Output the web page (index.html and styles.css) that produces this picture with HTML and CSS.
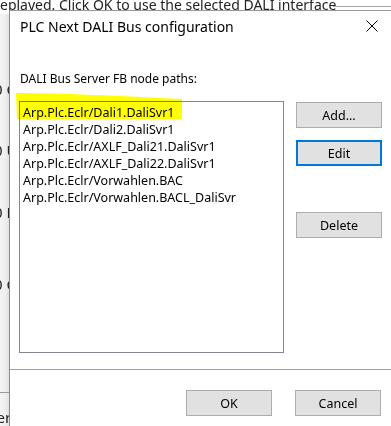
FILE: index.html
```html
<!DOCTYPE html>
<html>
<head>
<meta charset="utf-8">
<link rel="stylesheet" href="styles.css">
</head>
<body>
<div class="screen">
  <div class="bg">
    <div class="bg-top">eplayed. Click OK to use the selected DALI interface</div>
    <div class="bg-rule"></div>
    <div class="frag f1">0 C</div>
    <div class="frag f2">0 U</div>
    <div class="frag f3">0 N</div>
    <div class="frag f4">0 C</div>
    <div class="bg-line"></div>
    <div class="frag f5">ter</div>
  </div>

  <div class="dialog">
    <div class="titlebar">
      <span class="title">PLC Next DALI Bus configuration</span>
      <svg class="close" width="12" height="12" viewBox="0 0 12 12"><path d="M0.5 0.5 L11.5 11.5 M11.5 0.5 L0.5 11.5" stroke="#000" stroke-width="1" fill="none"/></svg>
    </div>
    <div class="body">
      <div class="label">DALI Bus Server FB node paths:</div>
      <div class="main">
        <div class="list">
          <div class="item">Arp.Plc.Eclr/Dali1.DaliSvr1</div>
          <div class="item">Arp.Plc.Eclr/Dali2.DaliSvr1</div>
          <div class="item">Arp.Plc.Eclr/AXLF_Dali21.DaliSvr1</div>
          <div class="item">Arp.Plc.Eclr/AXLF_Dali22.DaliSvr1</div>
          <div class="item">Arp.Plc.Eclr/Vorwahlen.BAC</div>
          <div class="item">Arp.Plc.Eclr/Vorwahlen.BACL_DaliSvr</div>
        </div>
        <div class="side">
          <button class="btn">Add...</button>
          <button class="btn focus">Edit</button>
          <button class="btn del">Delete</button>
        </div>
      </div>
    </div>
    <div class="sep"></div>
    <div class="footer">
      <button class="btn">OK</button>
      <button class="btn">Cancel</button>
    </div>
  </div>

  <svg class="marker" width="391" height="426" viewBox="0 0 391 426">
    <path d="M16 93 C 60 93, 120 96, 182 99 L 182 119 L 17 119 Z" fill="#ffff00"/>
  </svg>
</div>
</body>
</html>
```

FILE: styles.css
```css
html, body {
  margin: 0;
  padding: 0;
}
body {
  width: 391px;
  height: 426px;
  overflow: hidden;
  background: #fff;
  font-family: "Noto Sans", "Open Sans", sans-serif;
}
.screen {
  position: relative;
  width: 391px;
  height: 426px;
  overflow: hidden;
}
.bg {
  position: absolute;
  inset: 0;
  background: linear-gradient(to right, #f3f3f3 0px, #efefef 5px, #e2e2e2 9px);
  color: #222;
}
.bg-top {
  position: absolute;
  left: 0;
  top: -5px;
  font-size: 14px;
  white-space: nowrap;
  background: #fff;
  padding-right: 60px;
}
.bg-rule {
  position: absolute;
  left: 333px;
  right: 0;
  top: 6px;
  height: 1px;
  background: #a8a8a8;
}
.frag {
  position: absolute;
  left: -6px;
  font-size: 15px;
  white-space: nowrap;
  line-height: 18px;
}
.f1 { top: 80px; }
.f2 { top: 141px; }
.f3 { top: 203px; }
.f4 { top: 275px; }
.f5 { top: 408px; left: -9px; }
.bg-line {
  position: absolute;
  left: 0;
  width: 10px;
  top: 392px;
  height: 1px;
  background: #9a9a9a;
}

.dialog {
  position: absolute;
  left: 9px;
  top: 10px;
  right: 0;
  bottom: -20px;
  background: #fff;
  border-left: 1px solid #8c8c8c;
  border-top: 1px solid #9a9a9a;
  display: flex;
  flex-direction: column;
}
.titlebar {
  height: 30px;
  display: flex;
  align-items: center;
  justify-content: space-between;
  padding: 0 13px 0 10px;
}
.title {
  font-size: 14px;
  color: #000;
  margin-top: 0;
}
.close {
  display: block;
}
.body {
  padding: 29px 9px 0 9px;
}
.label {
  font-size: 12px;
  line-height: 18px;
  padding-left: 1px;
  color: #000;
}
.main {
  margin-top: 13px;
  display: flex;
  gap: 12px;
}
.list {
  width: 264px;
  height: 248px;
  border: 1px solid #828790;
  padding-top: 2px;
  background: #fff;
}
.item {
  font-size: 12.5px;
  line-height: 17px;
  padding-left: 3px;
  white-space: nowrap;
  color: #000;
}
.side {
  margin-top: 1px;
  display: flex;
  flex-direction: column;
  width: 86px;
}
.btn {
  box-sizing: border-box;
  width: 86px;
  height: 26px;
  background: #e1e1e1;
  border: 1px solid #adadad;
  font-family: "Noto Sans", "Open Sans", sans-serif;
  font-size: 12.5px;
  color: #000;
  padding: 0;
  margin: 0;
}
.focus {
  margin-top: 12px;
  border: 2px solid #0078d7;
}
.del {
  margin-top: 46px;
}
.sep {
  margin-top: 16px;
  height: 1px;
  background: #a0a0a0;
}
.footer {
  padding: 20px 10px 0 0;
  display: flex;
  justify-content: flex-end;
  gap: 23px;
}
.marker {
  position: absolute;
  left: 0;
  top: 0;
  mix-blend-mode: multiply;
  pointer-events: none;
}
```
